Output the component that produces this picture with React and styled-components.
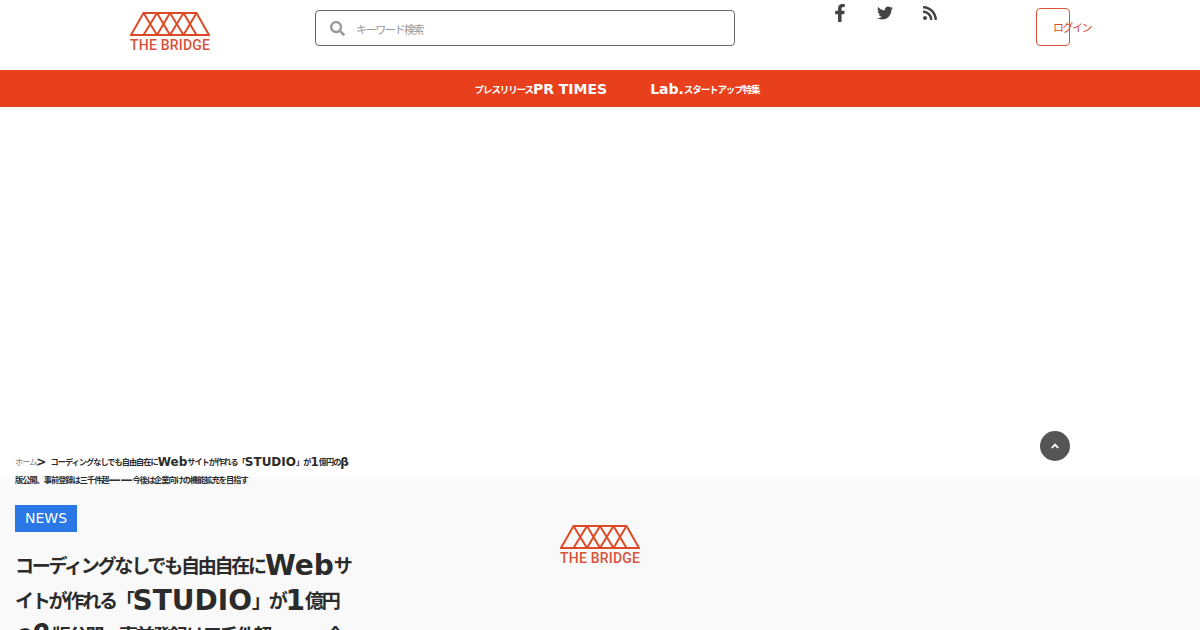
import React from 'react';
import styled, { createGlobalStyle } from 'styled-components';
import { FaAngleUp, FaFacebookF, FaRss, FaSearch, FaTwitter } from 'react-icons/fa';

const GlobalStyle = createGlobalStyle`
  html, body {
    margin: 0;
    height: 630px;
    overflow: hidden;
    background: #f9f9f9;
    color: #2b2b2b;
    font-family: "DejaVu Sans", "Noto Sans CJK JP", sans-serif;
  }
  * { box-sizing: border-box; }
`;

const Header = styled.header`
  display: flex;
  align-items: flex-start;
  height: 70px;
  padding-left: 130px;
  background: #fff;
`;

const LogoMark = styled.svg`
  display: block;
  flex: none;
  width: 80px;
  height: 38px;
  margin-top: ${(p) => p.$top}px;
`;

const Search = styled.form`
  display: flex;
  align-items: center;
  gap: 11px;
  width: 420px;
  height: 36px;
  margin: 10px 0 0 105px;
  padding-left: 14px;
  border: 1px solid #666;
  border-radius: 4px;
  color: #999;
`;

const SearchInput = styled.input`
  flex: 1;
  min-width: 0;
  border: 0;
  outline: 0;
  padding: 0;
  background: transparent;
  font: 16px "DejaVu Sans", "Noto Sans CJK JP", sans-serif;
  &::placeholder {
    color: #999;
    font-size: 11px;
    letter-spacing: -1.4px;
    opacity: 1;
  }
`;

const Social = styled.nav`
  display: flex;
  margin-left: 82px;
`;

const SocialLink = styled.a`
  display: flex;
  justify-content: center;
  align-items: center;
  width: 45px;
  height: 26px;
  color: #444;
  font-size: ${(p) => p.$size}px;
`;

const LoginButton = styled.button`
  width: 34px;
  height: 38px;
  margin: 8px 0 0 84px;
  padding: 0 0 0 16px;
  border: 1px solid #d9533a;
  border-radius: 4px;
  background: transparent;
  color: #d9472b;
  font: 16px "DejaVu Sans", "Noto Sans CJK JP", sans-serif;
  text-align: left;
  white-space: nowrap;
`;

const NavBar = styled.nav`
  display: flex;
  justify-content: center;
  align-items: center;
  gap: 43px;
  height: 37px;
  padding-left: 34px;
  background: #e8401c;
`;

const NavLink = styled.a`
  color: #fff;
  font-size: 14px;
  font-weight: 700;
`;

const AdSlot = styled.div`
  height: 370px;
  background: #fff;
`;

const Breadcrumb = styled.div`
  position: relative;
  width: 355px;
  margin: -24px 0 0;
  padding-left: 15px;
  font-size: 12px;
  font-weight: 700;
  line-height: 18px;
`;

const Crumb = styled.a`
  color: #777;
  font-weight: 400;
`;

const Hero = styled.div`
  display: grid;
  grid-template-columns: 1fr 80px 1fr;
`;

const Article = styled.article`
  max-width: 355px;
  padding-left: 15px;
`;

const Badge = styled.span`
  display: inline-block;
  height: 27px;
  margin-top: 16px;
  padding: 0 10px;
  background: #2a77e6;
  color: #fff;
  font-size: 14px;
  line-height: 27px;
`;

const Title = styled.h1`
  margin: 16px 0 0;
  font-size: 28px;
  font-weight: 700;
  line-height: 35px;
`;

const ToTop = styled.a`
  position: fixed;
  top: 431px;
  left: 1040px;
  display: flex;
  justify-content: center;
  align-items: center;
  width: 30px;
  height: 30px;
  border-radius: 50%;
  background: #555;
  color: #fff;
  font-size: 12px;
`;

// tofu in the screenshot advances 0.6em, so the japanese runs are tightened to the same width
const Ja = styled.span`
  font-family: "Noto Sans CJK JP", sans-serif;
  font-size: 0.68em;
  line-height: 1;
  letter-spacing: -0.118em;
  vertical-align: 0.08em;
`;

const Logo = ({ top = 0 }) => (
  <LogoMark $top={top} viewBox="0 0 80 38">
    <g fill="none" stroke="#dd4a26" strokeWidth="2">
      <path d="M13.5 1H66.5L79 23H1Z" />
      <path d="M13.5 1L27 23M27 1L13.5 23M27 1L40 23M40 1L27 23M40 1L53.5 23M53.5 1L40 23M53.5 1L66.5 23M66.5 1L53.5 23" />
    </g>
    <text x="0" y="37.5" fill="#d9533a" fontFamily="Roboto, sans-serif" fontWeight="500" fontSize="14" textLength="80">
      THE BRIDGE
    </text>
  </LogoMark>
);

const App = () => (
  <>
    <GlobalStyle />
    <Header>
      <Logo top={12} />
      <Search>
        <FaSearch size={15} />
        <SearchInput placeholder="キーワード検索" />
      </Search>
      <Social>
        <SocialLink $size={18}><FaFacebookF /></SocialLink>
        <SocialLink $size={16}><FaTwitter /></SocialLink>
        <SocialLink $size={16}><FaRss /></SocialLink>
      </Social>
      <LoginButton><Ja>ログイン</Ja></LoginButton>
    </Header>
    <NavBar>
      <NavLink><Ja>プレスリリース</Ja>PR TIMES</NavLink>
      <NavLink>Lab.<Ja>スタートアップ特集</Ja></NavLink>
    </NavBar>
    <AdSlot />
    <Breadcrumb>
      <Crumb><Ja>ホーム</Ja></Crumb>&gt;{' '}
      <Ja>コーディングなしでも自由自在に</Ja>Web<Ja>サイトが作れる「</Ja>STUDIO<Ja>」が</Ja>1<Ja>億円の</Ja>β
      <Ja>版公開、事前登録は三千件超</Ja>——<Ja>今後は企業向けの機能拡充を目指す</Ja>
    </Breadcrumb>
    <Hero>
      <Article>
        <Badge>NEWS</Badge>
        <Title>
          <Ja>コーディングなしでも自由自在に</Ja>Web<Ja>サイトが作れる「</Ja>STUDIO<Ja>」が</Ja>1<Ja>億円の</Ja>β
          <Ja>版公開、事前登録は三千件超</Ja>——<Ja>今後は企業向けの機能拡充を目指す</Ja>
        </Title>
      </Article>
      <Logo top={36} />
    </Hero>
    <ToTop><FaAngleUp /></ToTop>
  </>
);

export default App;
